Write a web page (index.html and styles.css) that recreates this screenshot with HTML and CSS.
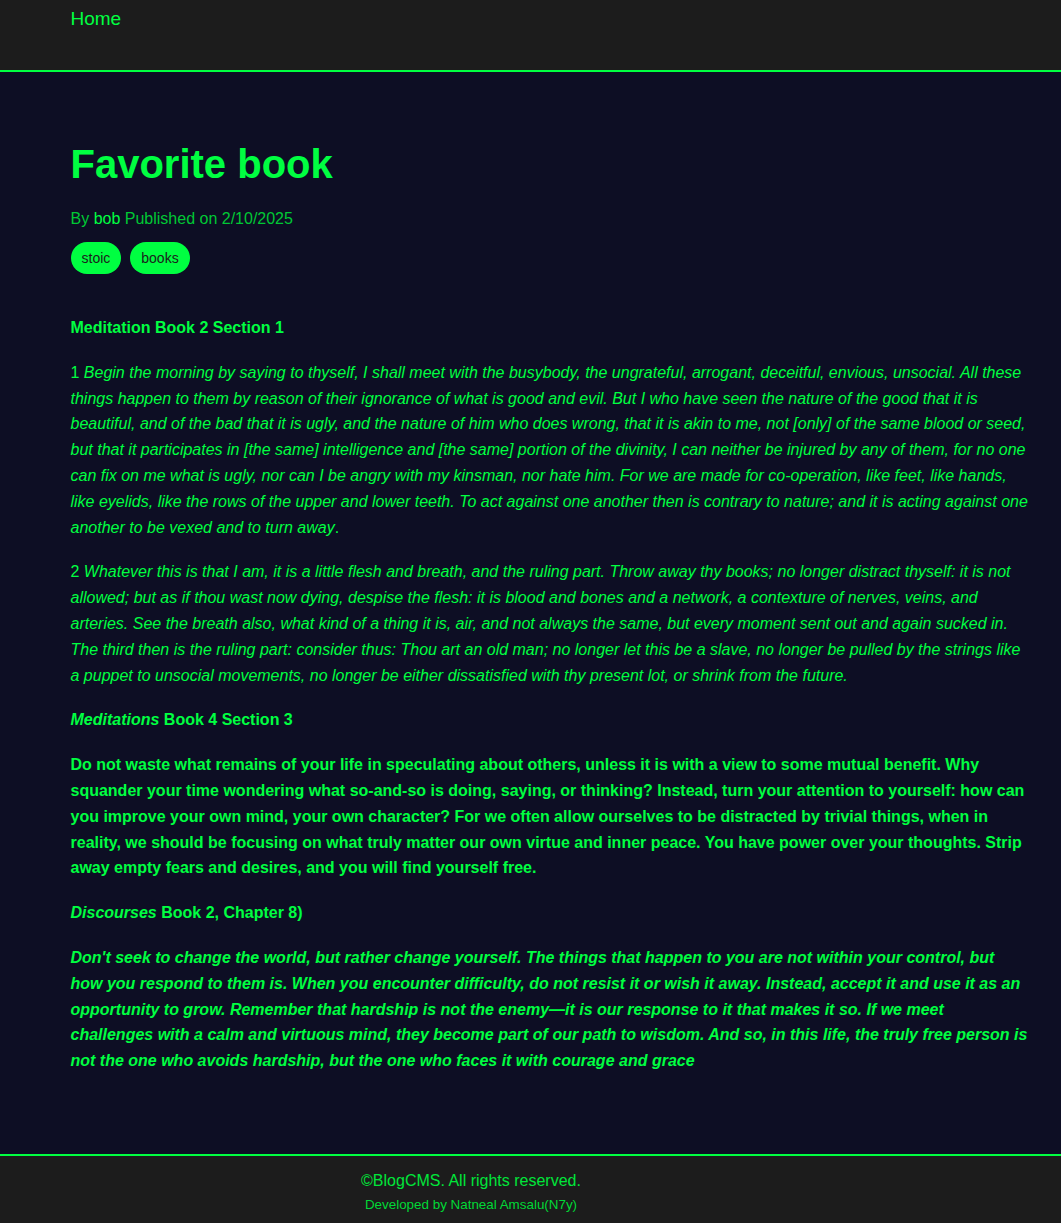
FILE: index.html
```html
<!DOCTYPE html>
<html lang="en">
<head>
<meta charset="utf-8">
<title>Favorite book</title>
<link rel="stylesheet" href="styles.css">
</head>
<body>
<header class="site-header">
  <nav class="container nav">
    <a class="nav-link" href="#">Home</a>
  </nav>
</header>
<main class="main">
  <article class="container post">
    <h1 class="post-title">Favorite book</h1>
    <p class="post-meta">By <span class="author">bob</span> Published on 2/10/2025</p>
    <div class="tags">
      <span class="tag">stoic</span>
      <span class="tag">books</span>
    </div>
    <div class="post-body">
      <p><strong>Meditation Book 2 Section 1</strong></p>
      <p>1 <em>Begin the morning by saying to thyself, I shall meet with the busybody, the ungrateful, arrogant, deceitful, envious, unsocial. All these things happen to them by reason of their ignorance of what is good and evil. But I who have seen the nature of the good that it is beautiful, and of the bad that it is ugly, and the nature of him who does wrong, that it is akin to me, not [only] of the same blood or seed, but that it participates in [the same] intelligence and [the same] portion of the divinity, I can neither be injured by any of them, for no one can fix on me what is ugly, nor can I be angry with my kinsman, nor hate him. For we are made for co-operation, like feet, like hands, like eyelids, like the rows of the upper and lower teeth. To act against one another then is contrary to nature; and it is acting against one another to be vexed and to turn away</em>.</p>
      <p>2 <em>Whatever this is that I am, it is a little flesh and breath, and the ruling part. Throw away thy books; no longer distract thyself: it is not allowed; but as if thou wast now dying, despise the flesh: it is blood and bones and a network, a contexture of nerves, veins, and arteries. See the breath also, what kind of a thing it is, air, and not always the same, but every moment sent out and again sucked in. The third then is the ruling part: consider thus: Thou art an old man; no longer let this be a slave, no longer be pulled by the strings like a puppet to unsocial movements, no longer be either dissatisfied with thy present lot, or shrink from the future.</em></p>
      <p><strong><em>Meditations</em> Book 4 Section 3</strong></p>
      <p><strong>Do not waste what remains of your life in speculating about others, unless it is with a view to some mutual benefit. Why squander your time wondering what so-and-so is doing, saying, or thinking? Instead, turn your attention to yourself: how can you improve your own mind, your own character? For we often allow ourselves to be distracted by trivial things, when in reality, we should be focusing on what truly matter our own virtue and inner peace. You have power over your thoughts. Strip away empty fears and desires, and you will find yourself free.</strong></p>
      <p><strong><em>Discourses</em> Book 2, Chapter 8)</strong></p>
      <p><strong><em>Don't seek to change the world, but rather change yourself. The things that happen to you are not within your control, but how you respond to them is. When you encounter difficulty, do not resist it or wish it away. Instead, accept it and use it as an opportunity to grow. Remember that hardship is not the enemy—it is our response to it that makes it so. If we meet challenges with a calm and virtuous mind, they become part of our path to wisdom. And so, in this life, the truly free person is not the one who avoids hardship, but the one who faces it with courage and grace</em></strong></p>
    </div>
  </article>
</main>
<footer class="site-footer">
  <div class="footer-inner">
    <p class="copyright">©BlogCMS. All rights reserved.</p>
    <p class="credit">Developed by Natneal Amsalu(N7y)</p>
  </div>
</footer>
</body>
</html>
```

FILE: styles.css
```css
html {
  background: #1c1c1c;
}

body {
  margin: 0;
  font-family: "Liberation Sans", Arial, sans-serif;
  color: #00ff41;
  background: #0d0e24;
}

.container {
  max-width: 1000px;
  margin: 0 auto;
  padding: 0 0 0 40px;
  box-sizing: border-box;
}

.site-header {
  background: #1c1c1c;
  border-bottom: 2px solid #00ff41;
  height: 70px;
  box-sizing: content-box;
}

.nav {
  padding-top: 8px;
}

.nav-link {
  color: #00ff41;
  text-decoration: none;
  font-size: 19px;
  line-height: 22px;
}

.main {
  padding: 41px 0 61px;
}

.post-title {
  font-size: 40px;
  line-height: 46px;
  margin: 28px 0 23px;
  font-weight: bold;
}

.post-meta {
  margin: 0;
  font-size: 16px;
  line-height: 18px;
  color: #00c834;
}

.author {
  color: #00ff41;
}

.tags {
  display: flex;
  gap: 9px;
  margin-top: 14px;
}

.tag {
  background: #00ff41;
  color: #1c1c1c;
  font-size: 14px;
  line-height: 16px;
  padding: 8px 11px;
  border-radius: 16px;
}

.post-body {
  padding-top: 22px;
}

.post-body p {
  font-size: 16px;
  line-height: 25.8px;
  margin: 19px 0;
}

.site-footer {
  background: #1c1c1c;
  border-top: 2px solid #00ff41;
  padding: 15px 0 12px;
}

.footer-inner {
  padding-right: 119px;
  text-align: center;
}

.copyright {
  margin: 0;
  font-size: 16px;
  line-height: 20px;
  color: #00e63a;
}

.credit {
  margin: 6px 0 0;
  font-size: 13.4px;
  line-height: 16px;
  color: #00d936;
}
```
